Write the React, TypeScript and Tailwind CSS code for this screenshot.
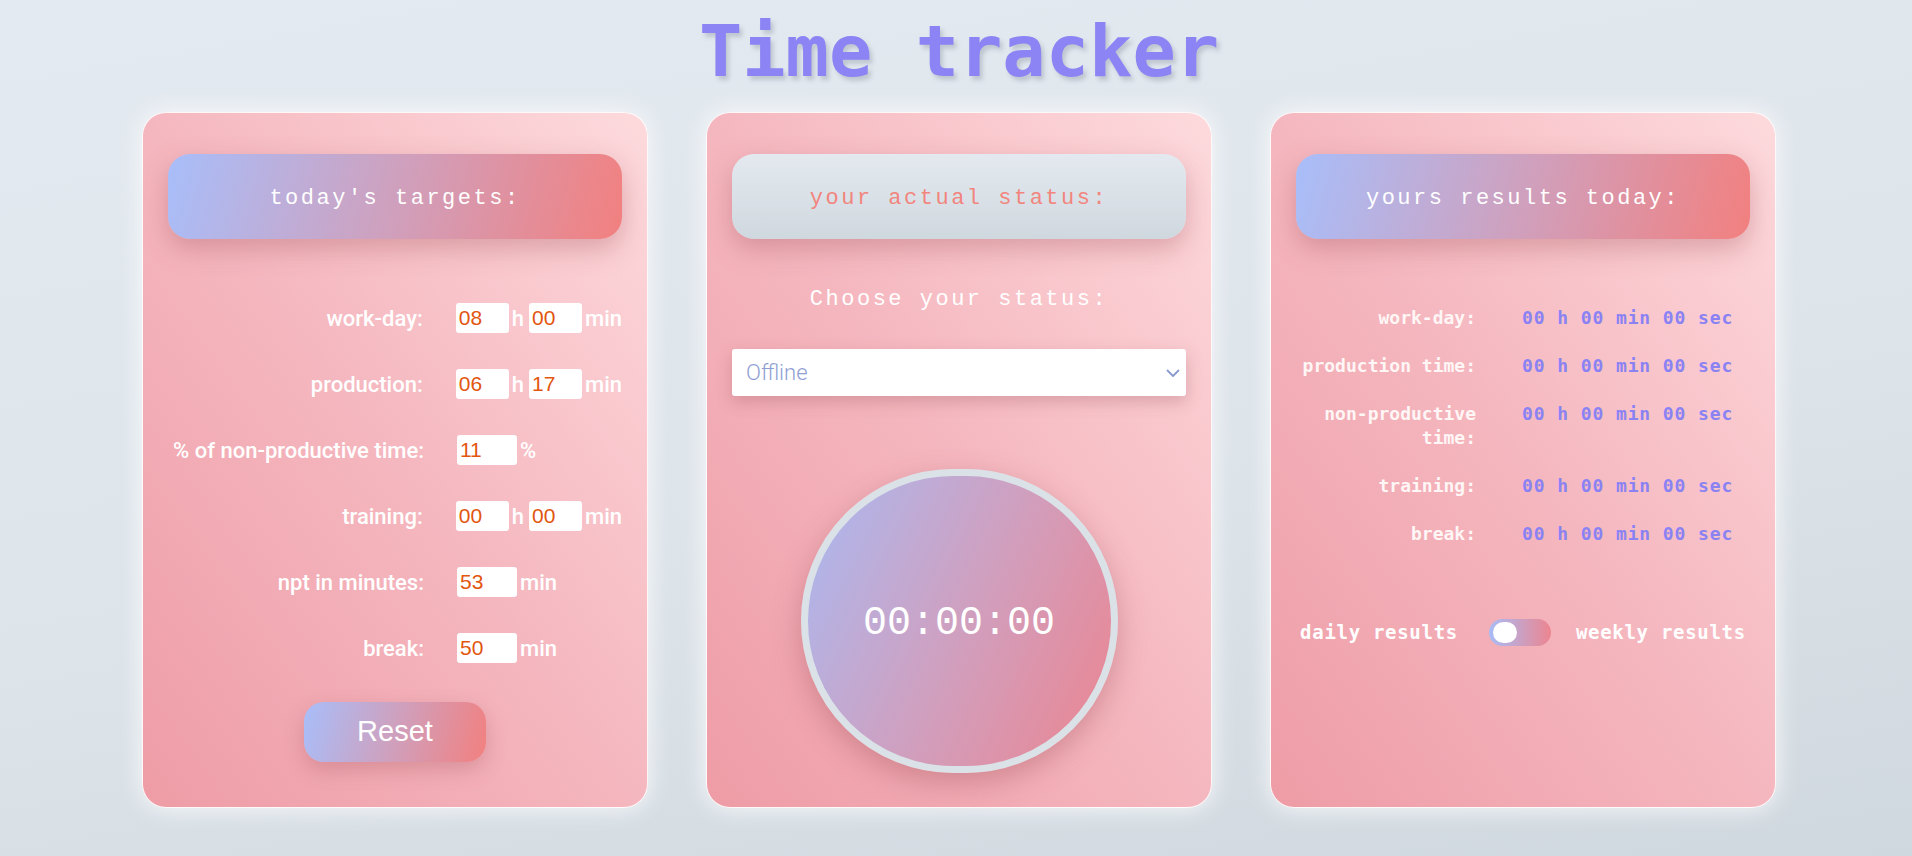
import React, { useState } from 'react';

// fonts
const monoBold = "font-['DejaVu_Sans_Mono',monospace] font-bold";
const monoLight = "font-['Liberation_Mono',monospace] font-normal";
const roboto = "font-['Roboto',sans-serif]";

const cardCls =
  'w-[506px] h-[696px] rounded-[24px] border border-white/90 bg-[linear-gradient(to_top_right,#ee9ca6_0%,#f5b7bf_50%,#fddadd_100%)] shadow-[0_0_24px_rgba(255,255,255,0.85)] pt-[41px] px-[25px] flex flex-col';

const Header: React.FC<{ children: React.ReactNode; gray?: boolean }> = ({ children, gray }) => (
  <div
    className={`h-[85px] w-full rounded-[22px] flex items-center justify-center pt-[4px] text-[22px] tracking-[2.5px] ${monoLight} shadow-[0_10px_26px_rgba(160,80,90,0.35)] ${
      gray
        ? 'bg-[linear-gradient(to_bottom,#e3e9ef,#d0d8df)] text-[#f2857d]'
        : 'bg-[linear-gradient(105deg,#a8befa_0%,#cfa0bd_50%,#f2807f_100%)] text-white'
    }`}
  >
    {children}
  </div>
);

const NumInput: React.FC<{ value: string; wide?: boolean }> = ({ value, wide }) => (
  <input
    defaultValue={value}
    className={`${wide ? 'w-[60px]' : 'w-[53px]'} h-[30px] rounded-[3px] bg-white px-[3px] text-[21px] text-[#e2560f] font-['Liberation_Sans',Arial,sans-serif] outline-none`}
  />
);

type Target = { label: string; a: string; b?: string; unit?: string };

const targets: Target[] = [
  { label: 'work-day:', a: '08', b: '00' },
  { label: 'production:', a: '06', b: '17' },
  { label: '% of non-productive time:', a: '11', unit: '%' },
  { label: 'training:', a: '00', b: '00' },
  { label: 'npt in minutes:', a: '53', unit: 'min' },
  { label: 'break:', a: '50', unit: 'min' },
];

const TargetsCard: React.FC = () => (
  <div className={cardCls}>
    <Header>today's targets:</Header>

    <div className="mt-[64px] flex flex-col gap-[36px]">
      {targets.map(t => (
        <div key={t.label} className={`flex items-center h-[30px] ${roboto} font-medium text-[22px] text-white`}>
          <span className="w-[256px] text-right whitespace-nowrap">{t.label}</span>
          <div className="ml-[33px] flex items-center">
            {t.b !== undefined ? (
              <>
                <NumInput value={t.a} />
                <span className="ml-[3px] mr-[5px]">h</span>
                <NumInput value={t.b} />
                <span className="ml-[3px]">min</span>
              </>
            ) : (
              <>
                <NumInput value={t.a} wide />
                <span className="ml-[3px]">{t.unit}</span>
              </>
            )}
          </div>
        </div>
      ))}
    </div>

    <button className="mt-[39px] self-center w-[182px] h-[60px] rounded-[20px] bg-[linear-gradient(105deg,#a8befa_0%,#cfa0bd_50%,#f2807f_100%)] text-white text-[29px] font-['Liberation_Sans',Arial,sans-serif] shadow-[0_8px_20px_rgba(160,80,90,0.3)]">
      Reset
    </button>
  </div>
);

const StatusCard: React.FC = () => {
  const [status, setStatus] = useState('offline');
  return (
    <div className={cardCls}>
      <Header gray>your actual status:</Header>

      <p className={`mt-[46px] h-[30px] leading-[30px] text-center text-white text-[22px] tracking-[2.5px] ${monoLight}`}>
        Choose your status:
      </p>

      <div className="mt-[34px] relative h-[47px] w-full shadow-[0_6px_16px_rgba(150,80,90,0.3)] rounded-[3px]">
        <select
          value={status}
          onChange={e => setStatus(e.target.value)}
          className={`appearance-none w-full h-full bg-white rounded-[3px] pl-[14px] text-[22px] font-light text-[#8f9ed4] ${roboto} outline-none`}
        >
          <option value="offline">Offline</option>
          <option value="production">Production</option>
          <option value="npt">Non-productive</option>
          <option value="training">Training</option>
          <option value="break">Break</option>
        </select>
        <svg
          className="absolute right-[6px] top-1/2 -translate-y-1/2 pointer-events-none"
          width="14"
          height="10"
          viewBox="0 0 14 10"
          fill="none"
        >
          <path d="M1.5 2.5 L7 8 L12.5 2.5" stroke="#8a9ad0" strokeWidth="1.8" strokeLinecap="round" strokeLinejoin="round" />
        </svg>
      </div>

      <div className="mt-[73px] self-center w-[317px] h-[304px] rounded-full border-[7px] border-[#dae2e8] bg-[linear-gradient(115deg,#aab9f1_0%,#cfa0c0_50%,#ec8590_100%)] shadow-[0_10px_28px_rgba(150,70,80,0.35)] flex items-center justify-center pt-[6px]">
        <span className={`text-white text-[40px] ${monoLight}`}>00:00:00</span>
      </div>
    </div>
  );
};

const results = ['work-day:', 'production time:', 'non-productive time:', 'training:', 'break:'];

const ResultsCard: React.FC = () => {
  const [weekly, setWeekly] = useState(false);
  return (
    <div className={cardCls}>
      <Header>yours results today:</Header>

      <div className={`mt-[67px] grid grid-cols-[180px_auto] gap-x-[46px] gap-y-[24px] leading-[24px] text-[18px] ${monoBold}`}>
        {results.map(r => (
          <React.Fragment key={r}>
            <span className="text-right text-[#fff6f6]">{r}</span>
            <span className="text-[#8a82f3] tracking-[0.9px] whitespace-nowrap">00 h 00 min 00 sec</span>
          </React.Fragment>
        ))}
      </div>

      <div className={`mt-[72px] flex items-center justify-center whitespace-nowrap text-white text-[19px] tracking-[0.7px] ${monoBold}`}>
        <span>daily results</span>
        <button
          onClick={() => setWeekly(w => !w)}
          className="ml-[31px] mr-[25px] w-[62px] h-[27px] rounded-full bg-[linear-gradient(to_right,#a8bcf6,#ec8590)] flex items-center px-[4px]"
        >
          <span className={`block w-[24px] h-[21px] rounded-full bg-white ${weekly ? 'ml-auto' : ''}`} />
        </button>
        <span>weekly results</span>
      </div>
    </div>
  );
};

export default function App() {
  return (
    <div className="min-h-screen w-full bg-[linear-gradient(170deg,#e4eaf1_0%,#dde4ea_55%,#d0d8df_100%)] flex flex-col items-center pt-[15px] pb-[48px] pl-[6px]">
      <h1
        className={`${monoBold} text-[72px] leading-[72px] text-[#8c84f4] [text-shadow:3px_4px_4px_rgba(110,120,140,0.3)]`}
      >
        Time tracker
      </h1>
      <div className="mt-[25px] flex gap-[58px]">
        <TargetsCard />
        <StatusCard />
        <ResultsCard />
      </div>
    </div>
  );
}
